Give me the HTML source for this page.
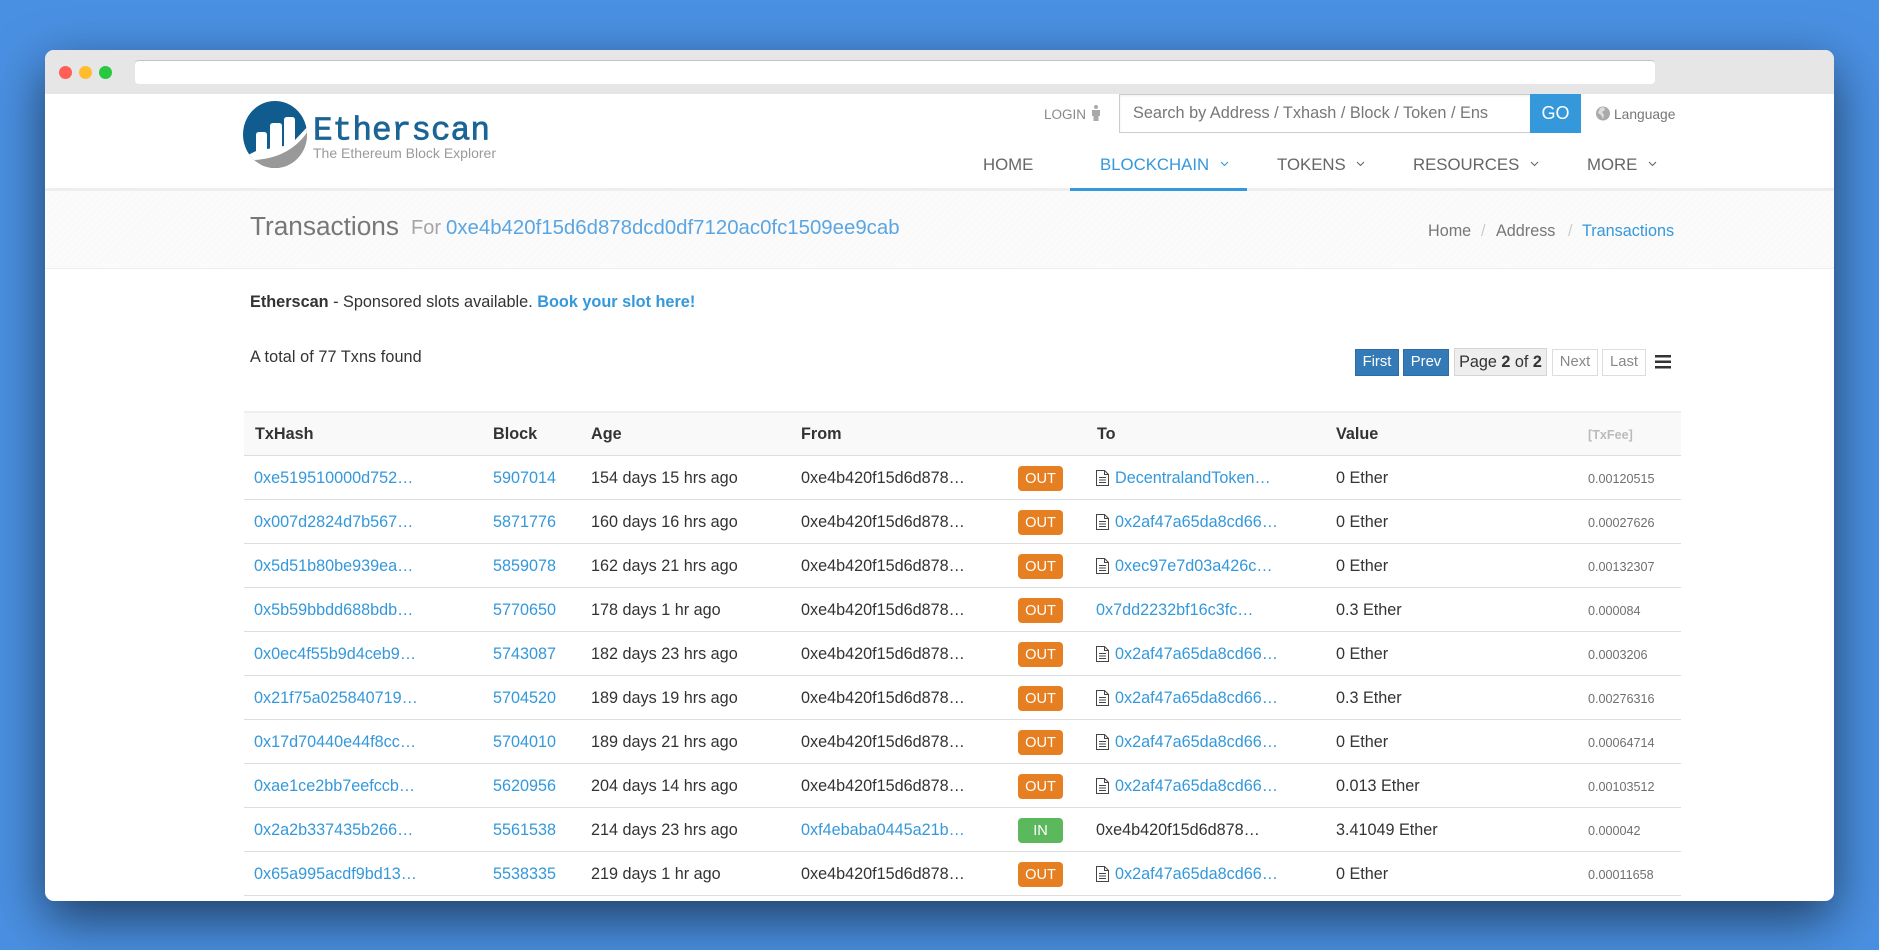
<!DOCTYPE html>
<html><head><meta charset="utf-8"><title>Transactions</title>
<style>
*{box-sizing:border-box}
html,body{margin:0;padding:0;width:1879px;height:950px;overflow:hidden;background:#4a90e2;font-family:"Liberation Sans",Arial,sans-serif;color:#333}
#win{position:absolute;left:45px;top:50px;width:1789px;height:851px;background:#fff;border-radius:9px;box-shadow:0 18px 52px rgba(0,0,0,.57)}
.a{position:absolute;white-space:nowrap}
a{color:#3498db;text-decoration:none}
.chrome{position:absolute;left:45px;top:50px;width:1789px;height:44px;background:#e6e6e6;border-radius:9px 9px 0 0}
.dot{position:absolute;top:66px;width:13px;height:13px;border-radius:50%}
.addr{position:absolute;left:135px;top:60px;width:1520px;height:24px;background:#fff;border-top:1.5px solid #c4c4c4;border-radius:4px}
.nav{font-size:16.8px;color:#666;top:153px;line-height:24px}
.chev{position:absolute;top:161px;width:9px;height:6px}
.hd{position:absolute;left:244px;width:1437px;top:411px;height:45px;background:#f9f9f9;border-top:2px solid #eee;border-bottom:1.5px solid #ddd}
.th{font-size:16.2px;font-weight:bold;color:#333;top:422px;line-height:24px}
.r{position:absolute;left:244px;width:1437px;height:44px;border-bottom:1.5px solid #ddd;font-size:16.2px;line-height:44px}
.r span,.r a,.r svg,.r b{position:absolute;white-space:nowrap}
.h{left:10px}.bk{left:249px}.ag{left:347px}.fr{left:557px}
.bd{left:774px;top:10px;width:45px;height:25px;border-radius:4px;background:#e67e22;color:#fff;font-weight:normal;font-size:14.6px;line-height:27px;text-align:center}
.bd.in{background:#5cb85c}
.ic{left:852px;top:14px}
.to{left:871px}.ton{left:852px}
.v{left:1092px}
.f{left:1344px;top:1px;font-size:12.6px;color:#6f6f6f}
.pg{position:absolute;top:349px;height:27px;font-size:14.8px;line-height:25px;text-align:center}
.pb{background:#337ab7;border:1px solid #2e6da4;color:#fff}
.pn{background:#fff;border:1px solid #ddd;color:#888}
</style></head>
<body>
<div id="win"></div>
<div class="chrome"></div>
<div class="dot" style="left:59px;background:#ff5f57"></div>
<div class="dot" style="left:79px;background:#ffbd2e"></div>
<div class="dot" style="left:99px;background:#28c940"></div>
<div class="addr"></div>

<svg class="a" style="left:240px;top:96px" width="270" height="78" viewBox="240 96 270 78">
<defs><clipPath id="c"><ellipse cx="275" cy="134.5" rx="32" ry="33.5"/></clipPath></defs>
<g clip-path="url(#c)">
<rect x="240" y="96" width="70" height="75" fill="#115c8e"/>
<path d="M256 135q0-3 3-3h5q3 0 3 3v22h-11zM270 126q0-3 3-3h6q3 0 3 3v30h-12zM284 120q0-3 3-3h5q3 0 3 3v26l-11 8z" fill="#fff"/>
<path d="M248 155L256 151L284 146L295 140L310 124V135L290 160L252 165Z" fill="#fff"/>
<path d="M254 160Q290 158 308 131V172H250Z" fill="#999"/>
</g>
<text x="313" y="139.500" font-family="Liberation Mono" font-size="33" fill="#1a6596" stroke="#1a6596" stroke-width=".7" textLength="177" lengthAdjust="spacingAndGlyphs">Etherscan</text>
<text x="313" y="158" font-family="Liberation Sans" font-size="13.4" fill="#9a9a9a" textLength="183" lengthAdjust="spacingAndGlyphs">The Ethereum Block Explorer</text>
</svg>

<div class="a" style="left:1044px;top:105px;font-size:13.5px;line-height:20px;color:#888">LOGIN</div>
<svg class="a" style="left:1091px;top:105px" width="10" height="16" viewBox="0 0 10 16"><circle cx="5" cy="2" r="2" fill="#aaa"/><path d="M1 5h8v6H7.500v5h-5v-5H1z" fill="#aaa"/></svg>
<div class="a" style="left:1119px;top:94px;width:411px;height:39px;border:1px solid #ccc;border-right:0;box-shadow:inset 0 1px 2px rgba(0,0,0,.07);background:#fff;padding-left:13px;font-size:16.3px;line-height:37px;color:#777">Search by Address / Txhash / Block / Token / Ens</div>
<div class="a" style="left:1530px;top:94px;width:51px;height:39px;background:#3498db;color:#fff;font-size:18px;line-height:38px;text-align:center">GO</div>
<svg class="a" style="left:1596px;top:106px" width="14" height="15" viewBox="0 0 14 15"><circle cx="7" cy="7.500" r="7" fill="#aaa"/><path d="M4 2l4-1 1 3-3 2 2 3-1 4-2-4-3-2z" fill="#ddd"/></svg>
<div class="a" style="left:1614px;top:105px;font-size:13.8px;line-height:20px;color:#777">Language</div>

<div class="a nav" style="left:983px">HOME</div>
<div class="a nav" style="left:1100px;color:#3498db">BLOCKCHAIN</div>
<svg class="chev" style="left:1220px" viewBox="0 0 8 6"><path d="M.5 1L4 4.500 7.500 1" fill="none" stroke="#3498db" stroke-width="1.100"/></svg>
<div class="a nav" style="left:1277px">TOKENS</div>
<svg class="chev" style="left:1356px" viewBox="0 0 8 6"><path d="M.5 1L4 4.500 7.500 1" fill="none" stroke="#666" stroke-width="1.100"/></svg>
<div class="a nav" style="left:1413px">RESOURCES</div>
<svg class="chev" style="left:1530px" viewBox="0 0 8 6"><path d="M.5 1L4 4.500 7.500 1" fill="none" stroke="#666" stroke-width="1.100"/></svg>
<div class="a nav" style="left:1587px">MORE</div>
<svg class="chev" style="left:1648px" viewBox="0 0 8 6"><path d="M.5 1L4 4.500 7.500 1" fill="none" stroke="#666" stroke-width="1.100"/></svg>

<div class="a" style="left:45px;top:188px;width:1789px;height:3px;background:#eee"></div>
<div class="a" style="left:1070px;top:188px;width:177px;height:3px;background:#3498db"></div>
<div class="a" style="left:45px;top:191px;width:1789px;height:78px;background:repeating-linear-gradient(135deg,#fbfbfb 0 3px,#f9f9f9 3px 5px);border-bottom:1px solid #eee"></div>

<div class="a" style="left:250px;top:210px;font-size:26.2px;line-height:32px;color:#777">Transactions</div>
<div class="a" style="left:411px;top:213px;font-size:20px;line-height:30px;color:#a5a5a5">For</div>
<div class="a" style="left:446px;top:213px;font-size:20.4px;line-height:30px;color:#5aa5e2">0xe4b420f15d6d878dcd0df7120ac0fc1509ee9cab</div>

<div class="a" style="left:1428px;top:219px;font-size:16.2px;line-height:24px;color:#777">Home</div>
<div class="a" style="left:1481px;top:219px;font-size:16.2px;line-height:24px;color:#ccc">/</div>
<div class="a" style="left:1496px;top:219px;font-size:16.2px;line-height:24px;color:#777">Address</div>
<div class="a" style="left:1568px;top:219px;font-size:16.2px;line-height:24px;color:#ccc">/</div>
<div class="a" style="left:1582px;top:219px;font-size:16.2px;line-height:24px;color:#3498db">Transactions</div>

<div class="a" style="left:250px;top:290px;font-size:16.25px;line-height:24px"><b>Etherscan</b> - Sponsored slots available. <a href="#"><b>Book your slot here!</b></a></div>
<div class="a" style="left:250px;top:345px;font-size:16.2px;line-height:24px;letter-spacing:.08px">A total of 77 Txns found</div>

<div class="pg pb" style="left:1355px;width:44px">First</div>
<div class="pg pb" style="left:1403px;width:46px">Prev</div>
<div class="pg" style="left:1454px;width:93px;top:348px;height:28px;background:#eee;border:1px solid #d5d5d5;color:#333;line-height:26px;font-size:16.2px">Page <b>2</b> of <b>2</b></div>
<div class="pg pn" style="left:1552px;width:46px">Next</div>
<div class="pg pn" style="left:1602px;width:44px">Last</div>
<svg class="a" style="left:1655px;top:355px" width="16" height="14" viewBox="0 0 16 14"><path d="M0 0h16v2.500H0zM0 5.500h16V8H0zM0 11h16v2.500H0z" fill="#333"/></svg>

<div class="hd"></div>
<div class="a th" style="left:255px">TxHash</div>
<div class="a th" style="left:493px">Block</div>
<div class="a th" style="left:591px">Age</div>
<div class="a th" style="left:801px">From</div>
<div class="a th" style="left:1097px">To</div>
<div class="a th" style="left:1336px">Value</div>
<div class="a" style="left:1588px;top:423px;font-size:12.6px;font-weight:bold;color:#bbb;line-height:24px">[TxFee]</div>

<div class="r" style="top:456px"><a class="h" href="#">0xe519510000d752…</a><a class="bk" href="#">5907014</a><span class="ag">154 days 15 hrs ago</span><span class="fr">0xe4b420f15d6d878…</span><span class="bd">OUT</span><svg class="ic" width="13" height="16" viewBox="0 0 13 16"><path d="M.5.500h8l4 4v11H.500zM8.500.500v4h4M3 7.500h7M3 10h7M3 12.500h7" fill="none" stroke="#444"/></svg><a class="to" href="#">DecentralandToken…</a><span class="v">0 Ether</span><span class="f">0.00120515</span></div>
<div class="r" style="top:500px"><a class="h" href="#">0x007d2824d7b567…</a><a class="bk" href="#">5871776</a><span class="ag">160 days 16 hrs ago</span><span class="fr">0xe4b420f15d6d878…</span><span class="bd">OUT</span><svg class="ic" width="13" height="16" viewBox="0 0 13 16"><path d="M.5.500h8l4 4v11H.500zM8.500.500v4h4M3 7.500h7M3 10h7M3 12.500h7" fill="none" stroke="#444"/></svg><a class="to" href="#">0x2af47a65da8cd66…</a><span class="v">0 Ether</span><span class="f">0.00027626</span></div>
<div class="r" style="top:544px"><a class="h" href="#">0x5d51b80be939ea…</a><a class="bk" href="#">5859078</a><span class="ag">162 days 21 hrs ago</span><span class="fr">0xe4b420f15d6d878…</span><span class="bd">OUT</span><svg class="ic" width="13" height="16" viewBox="0 0 13 16"><path d="M.5.500h8l4 4v11H.500zM8.500.500v4h4M3 7.500h7M3 10h7M3 12.500h7" fill="none" stroke="#444"/></svg><a class="to" href="#">0xec97e7d03a426c…</a><span class="v">0 Ether</span><span class="f">0.00132307</span></div>
<div class="r" style="top:588px"><a class="h" href="#">0x5b59bbdd688bdb…</a><a class="bk" href="#">5770650</a><span class="ag">178 days 1 hr ago</span><span class="fr">0xe4b420f15d6d878…</span><span class="bd">OUT</span><a class="ton" href="#">0x7dd2232bf16c3fc…</a><span class="v">0.3 Ether</span><span class="f">0.000084</span></div>
<div class="r" style="top:632px"><a class="h" href="#">0x0ec4f55b9d4ceb9…</a><a class="bk" href="#">5743087</a><span class="ag">182 days 23 hrs ago</span><span class="fr">0xe4b420f15d6d878…</span><span class="bd">OUT</span><svg class="ic" width="13" height="16" viewBox="0 0 13 16"><path d="M.5.500h8l4 4v11H.500zM8.500.500v4h4M3 7.500h7M3 10h7M3 12.500h7" fill="none" stroke="#444"/></svg><a class="to" href="#">0x2af47a65da8cd66…</a><span class="v">0 Ether</span><span class="f">0.0003206</span></div>
<div class="r" style="top:676px"><a class="h" href="#">0x21f75a025840719…</a><a class="bk" href="#">5704520</a><span class="ag">189 days 19 hrs ago</span><span class="fr">0xe4b420f15d6d878…</span><span class="bd">OUT</span><svg class="ic" width="13" height="16" viewBox="0 0 13 16"><path d="M.5.500h8l4 4v11H.500zM8.500.500v4h4M3 7.500h7M3 10h7M3 12.500h7" fill="none" stroke="#444"/></svg><a class="to" href="#">0x2af47a65da8cd66…</a><span class="v">0.3 Ether</span><span class="f">0.00276316</span></div>
<div class="r" style="top:720px"><a class="h" href="#">0x17d70440e44f8cc…</a><a class="bk" href="#">5704010</a><span class="ag">189 days 21 hrs ago</span><span class="fr">0xe4b420f15d6d878…</span><span class="bd">OUT</span><svg class="ic" width="13" height="16" viewBox="0 0 13 16"><path d="M.5.500h8l4 4v11H.500zM8.500.500v4h4M3 7.500h7M3 10h7M3 12.500h7" fill="none" stroke="#444"/></svg><a class="to" href="#">0x2af47a65da8cd66…</a><span class="v">0 Ether</span><span class="f">0.00064714</span></div>
<div class="r" style="top:764px"><a class="h" href="#">0xae1ce2bb7eefccb…</a><a class="bk" href="#">5620956</a><span class="ag">204 days 14 hrs ago</span><span class="fr">0xe4b420f15d6d878…</span><span class="bd">OUT</span><svg class="ic" width="13" height="16" viewBox="0 0 13 16"><path d="M.5.500h8l4 4v11H.500zM8.500.500v4h4M3 7.500h7M3 10h7M3 12.500h7" fill="none" stroke="#444"/></svg><a class="to" href="#">0x2af47a65da8cd66…</a><span class="v">0.013 Ether</span><span class="f">0.00103512</span></div>
<div class="r" style="top:808px"><a class="h" href="#">0x2a2b337435b266…</a><a class="bk" href="#">5561538</a><span class="ag">214 days 23 hrs ago</span><a class="fr" href="#">0xf4ebaba0445a21b…</a><span class="bd in">IN</span><span class="ton">0xe4b420f15d6d878…</span><span class="v">3.41049 Ether</span><span class="f">0.000042</span></div>
<div class="r" style="top:852px"><a class="h" href="#">0x65a995acdf9bd13…</a><a class="bk" href="#">5538335</a><span class="ag">219 days 1 hr ago</span><span class="fr">0xe4b420f15d6d878…</span><span class="bd">OUT</span><svg class="ic" width="13" height="16" viewBox="0 0 13 16"><path d="M.5.500h8l4 4v11H.500zM8.500.500v4h4M3 7.500h7M3 10h7M3 12.500h7" fill="none" stroke="#444"/></svg><a class="to" href="#">0x2af47a65da8cd66…</a><span class="v">0 Ether</span><span class="f">0.00011658</span></div>
</body></html>
